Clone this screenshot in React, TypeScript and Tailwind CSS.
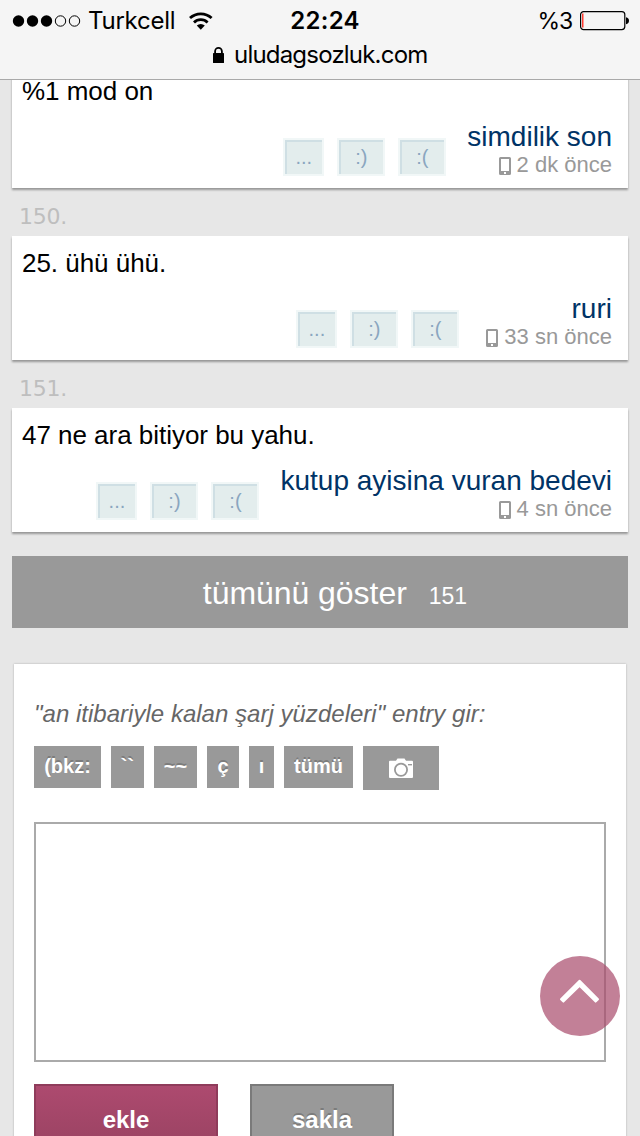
import type { ReactNode } from 'react';

interface Entry {
    no?: string;
    text: string;
    author: string;
    time: string;
}

const ENTRIES: Entry[] = [
    { text: '%1 mod on', author: 'simdilik son', time: '2 dk önce' },
    { no: '150.', text: '25. ühü ühü.', author: 'ruri', time: '33 sn önce' },
    { no: '151.', text: '47 ne ara bitiyor bu yahu.', author: 'kutup ayisina vuran bedevi', time: '4 sn önce' },
];

const TOOLS = [
    { label: '(bkz:', width: 'w-[67px]' },
    { label: '``', width: 'w-[33px]' },
    { label: '~~', width: 'w-[43px]' },
    { label: 'ç', width: 'w-8' },
    { label: 'ı', width: 'w-[25px]' },
    { label: 'tümü', width: 'w-[69px]' },
];

export default function App() {
    return (
        <div className="relative h-[1136px] w-[640px] overflow-hidden bg-[#e7e7e7] font-['Liberation_Sans',Arial,sans-serif] text-black">
            <BrowserBar />

            {/* The first entry is scrolled partly under the browser bar */}
            <main className="-mt-4 px-3">
                {ENTRIES.map((entry) => (
                    <EntryCard key={entry.author} entry={entry} />
                ))}

                <button className="mt-6 flex h-[72px] w-full items-baseline justify-center bg-[#999] pt-[19px] pl-[30px] text-white">
                    <span className="text-[32px] leading-9 tracking-[-0.05px]">tümünü göster</span>
                    <span className="ml-[22px] text-[23px] leading-9">151</span>
                </button>

                <EntryForm />
            </main>

            <button className="absolute top-[956px] left-[540px] flex size-20 items-center justify-center rounded-full bg-[#a84a6b]/70">
                <svg width="80" height="80" viewBox="0 0 80 80" fill="white" stroke="white" strokeWidth="2" strokeLinejoin="round">
                    <path d="M39.6 24.8 58 43.2 55.6 45.6 39.6 29.9 23.4 45.6 21 43.2z" />
                </svg>
            </button>
        </div>
    );
}

function BrowserBar() {
    return (
        <header className="relative z-10 h-20 border-b-[1px] border-[#a9a9a9] bg-[#f5f5f5] font-[Inter,sans-serif] text-[24px]">
            <div className="grid h-[41px] grid-cols-[1fr_auto_1fr] items-center pr-[10px] pl-3">
                <div className="flex items-center">
                    <svg width="70" height="14" viewBox="0 0 70 14">
                        <circle cx="6.5" cy="7" r="5.7" />
                        <circle cx="20.5" cy="7" r="5.7" />
                        <circle cx="34.5" cy="7" r="5.7" />
                        <circle cx="48.5" cy="7" r="5.2" fill="none" stroke="black" />
                        <circle cx="62.5" cy="7" r="5.2" fill="none" stroke="black" />
                    </svg>
                    <span className="ml-[6px] leading-8 tracking-[-0.25px]">Turkcell</span>
                    <svg className="ml-[13px]" width="26" height="20" viewBox="0 0 26 20" fill="none" stroke="black" strokeWidth="2.8">
                        <path d="M2 7.1a15.8 15.8 0 0 1 21.6 0" />
                        <path d="M6 11.4a9.8 9.8 0 0 1 13.6 0" />
                        <path d="M12.8 18.8 8.8 14.6a5.8 5.8 0 0 1 8 0z" fill="black" stroke="none" />
                    </svg>
                </div>
                <span className="pl-[8px] font-semibold leading-8 tracking-[0.3px]">22:24</span>
                <div className="flex items-center justify-end">
                    <span className="text-[23px] leading-8 tracking-[-1.2px]">%3</span>
                    <svg className="ml-[8px]" width="50" height="20" viewBox="0 0 50 20">
                        <rect x="0.6" y="0.6" width="44.2" height="18" rx="3" fill="none" stroke="black" strokeWidth="1.2" />
                        <rect x="2" y="2.5" width="1.5" height="14" fill="#ff3b30" />
                        <path d="M46 6.2c4 .5 4 6.5 0 7z" />
                    </svg>
                </div>
            </div>
            <div className="-mt-px flex items-center pl-[213px]">
                <svg width="11" height="17" viewBox="0 0 11 17">
                    <rect y="6" width="11" height="10" rx="0.6" />
                    <path d="M2.1 8V4.3a3.4 3.4 0 0 1 6.8 0V8" fill="none" stroke="black" strokeWidth="1.8" />
                </svg>
                <span className="ml-[10px] leading-[30px] tracking-[-0.8px]">uludagsozluk.com</span>
            </div>
        </header>
    );
}

function EntryCard({ entry }: { entry: Entry }) {
    return (
        <>
            {entry.no && (
                <div className="h-12 pt-[17px] pl-[7px] font-['DejaVu_Sans',sans-serif] text-[22px] leading-6 tracking-[-0.25px] text-[#bebebe]">
                    {entry.no}
                </div>
            )}
            <article className="h-[124px] bg-white px-[10px] pt-[11px] shadow-[0_2px_2px_rgba(0,0,0,0.35)]">
                <p className="text-[26px] leading-8 tracking-[-0.03px]">{entry.text}</p>
                <footer className="mt-[15px] flex justify-end pr-[6px]">
                    <div className="mt-4 mr-[21px] flex gap-[13px]">
                        <VoteButton width="w-[41px]">...</VoteButton>
                        <VoteButton width="w-12">:)</VoteButton>
                        <VoteButton width="w-12">:(</VoteButton>
                    </div>
                    <div className="text-right">
                        <div className="text-[28px] leading-[30px] text-[#003366]">{entry.author}</div>
                        <div className="flex items-center justify-end pl-[6px] text-[22px] leading-[26px] text-[#999]">
                            <svg className="mt-px mr-[6px]" width="12" height="18" viewBox="0 0 12 18">
                                <path
                                    fill="currentColor"
                                    fillRule="evenodd"
                                    d="M1.5 0h9A1.5 1.5 0 0 1 12 1.5v15a1.5 1.5 0 0 1-1.5 1.5h-9A1.5 1.5 0 0 1 0 16.5v-15A1.5 1.5 0 0 1 1.5 0zM2 2v12h8V2zM5 15v2h2v-2z"
                                />
                            </svg>
                            {entry.time}
                        </div>
                    </div>
                </footer>
            </article>
        </>
    );
}

function VoteButton({ width, children }: { width: string; children: ReactNode }) {
    return (
        <button className={`h-[38px] border-2 border-[#f1f7f7] bg-[#e3eded] text-[20px] leading-8 text-[#8aa6c0] shadow-[inset_2px_2px_0_#cfdfe4] ${width}`}>
            {children}
        </button>
    );
}

function EntryForm() {
    return (
        <section className="mx-[2px] mt-9 h-[600px] bg-white px-5 pt-9 shadow-[0_0_2px_rgba(0,0,0,0.25)]">
            <p className="text-[24px] leading-7 tracking-[0.02px] text-[#666] italic">&quot;an itibariyle kalan şarj yüzdeleri&quot; entry gir:</p>
            <div className="mt-[18px] flex items-start gap-[10px]">
                {TOOLS.map((tool) => (
                    <button
                        key={tool.label}
                        className={`h-[42px] bg-[#999] pb-[2px] text-[20px] font-bold leading-[40px] text-white [text-shadow:0_-2px_0_rgba(0,0,0,0.2)] ${tool.width}`}
                    >
                        {tool.label}
                    </button>
                ))}
                <button className="flex h-11 w-[76px] items-center justify-center bg-[#999]">
                    <svg className="-mt-px" width="24" height="20" viewBox="0 0 24 20">
                        <path d="M1 2.8h6L8.5.4h7L17 2.8h6a1 1 0 0 1 1 1V19a1 1 0 0 1-1 1H1a1 1 0 0 1-1-1V3.8a1 1 0 0 1 1-1z" fill="white" />
                        <circle cx="12" cy="11.7" r="6.1" fill="white" stroke="#999" strokeWidth="1.8" />
                        <path d="M19 6.7h4" stroke="#999" strokeWidth="1.4" />
                    </svg>
                </button>
            </div>
            <textarea className="mt-8 block h-60 w-[572px] resize-none border-2 border-[#aaa] bg-white" />
            <div className="mt-[22px] flex gap-8">
                <button className="h-[72px] w-[184px] border-2 border-[#8f3c5b] bg-linear-to-b from-[#ad4a6f] to-[#984261] text-[24px] font-bold text-white">
                    ekle
                </button>
                <button className="h-[72px] w-36 border-2 border-[#7a7a7a] bg-[#999] text-[24px] font-bold text-white [text-shadow:0_-2px_0_rgba(0,0,0,0.2)]">
                    sakla
                </button>
            </div>
        </section>
    );
}
